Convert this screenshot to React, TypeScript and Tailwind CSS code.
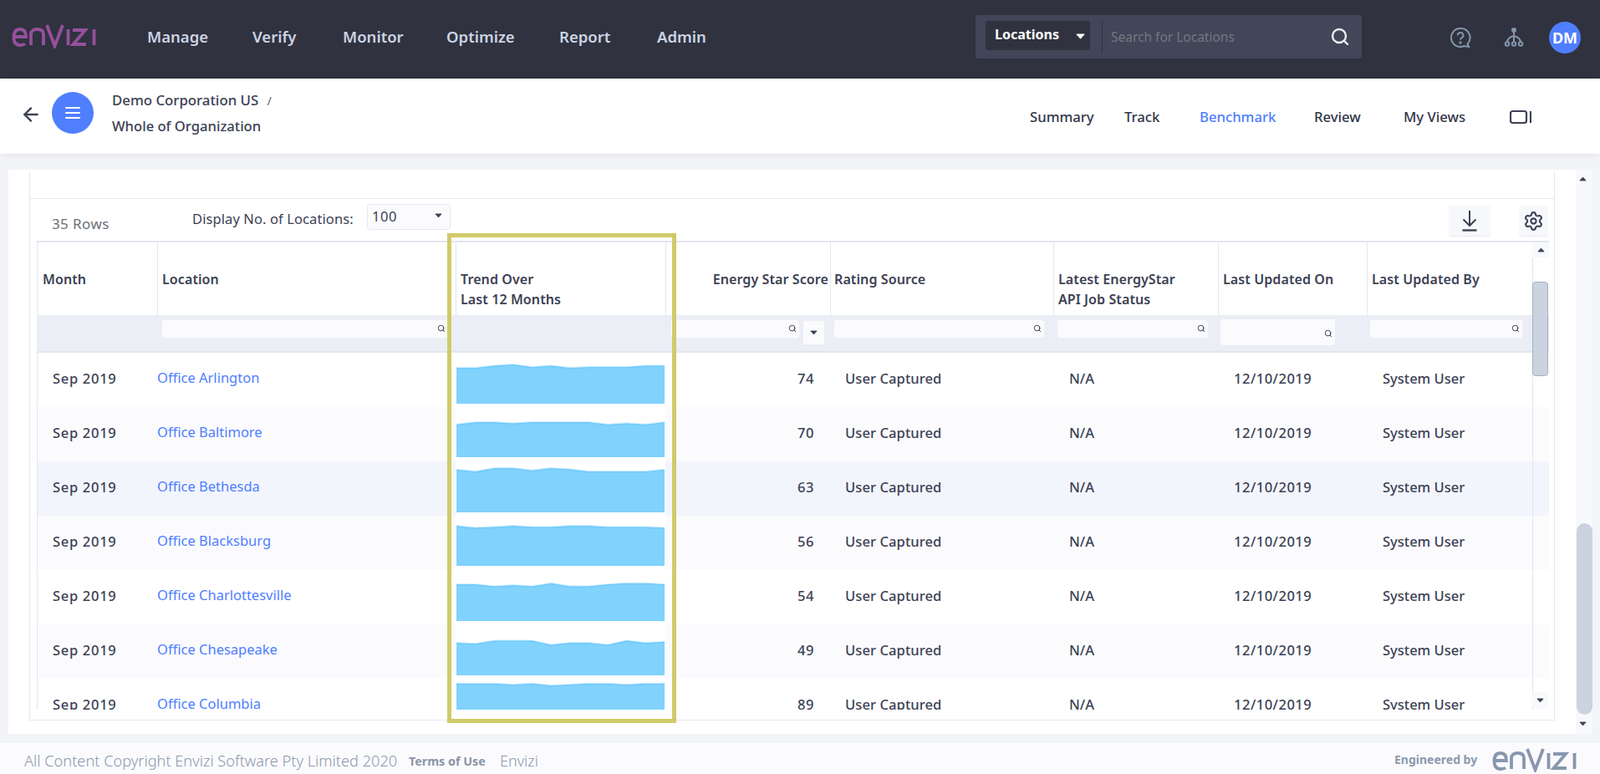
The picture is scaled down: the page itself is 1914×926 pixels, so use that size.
import { ArrowLeft, Search, Settings } from "lucide-react";

const rows = [
  { name: "Office Arlington", score: "74", bg: "bg-white", bottom: 61, ys: [30,30,22,18,27,22,30,27,27,27,22,22], base: 430, rowTop: 422 },
  { name: "Office Baltimore", score: "70", bg: "bg-[#fbfbfe]", bottom: 60, ys: [233,225,225,229,225,225,225,225,233,229,233,225], base: 430, rowTop: 487 },
  { name: "Office Bethesda", score: "63", bg: "bg-[#f3f5fd]", bottom: 61, ys: [395,402,390,390,398,390,394,402,402,402,402,395], base: 430, rowTop: 552 },
  { name: "Office Blacksburg", score: "56", bg: "bg-[#fbfbfe]", bottom: 60, ys: [597,604,601,597,601,601,597,597,601,601,601,604], base: 430, rowTop: 617 },
  { name: "Office Charlottesville", score: "54", bg: "bg-white", bottom: 61, ys: [87,87,94,90,94,83,94,94,87,83,83,87], base: 670, rowTop: 682 },
  { name: "Office Chesapeake", score: "49", bg: "bg-[#fbfbfe]", bottom: 61, ys: [297,300,289,289,289,304,297,297,304,289,297,293], base: 670, rowTop: 747 },
  { name: "Office Columbia", score: "89", bg: "bg-white", bottom: 37, ys: [443,443,443,447,443,450,447,443,443,447,443,443], base: 670, rowTop: 812 },
];

const GRID = "grid grid-cols-[144px_357px_251px_197px_267px_197px_178px_198px]";

function Logo({ color, className }: { color: string; className: string }) {
  return (
    <svg viewBox="0 0 102 30" className={className} fill="none" stroke={color} strokeWidth="3.800" role="img" aria-label="envizi logo">
      <path d="M3 16h14c0-6-2.500-9-7-9s-7.500 3-7.500 9.500 3 9.500 7.500 9.500c2.500 0 4.500-.5 6-1.500" />
      <path d="M23 26V13c0-4 3-6 7.500-6s7.500 2 7.500 6v13" />
      <path d="M42 2L51.500 27L61 2" />
      <path d="M67.500 7v19" />
      <path d="M73 8h15L73.500 25h15.500" />
      <path d="M98.500 7v19" />
    </svg>
  );
}

function Caret({ className, color = "#3c4154" }: { className?: string; color?: string }) {
  return (
    <svg viewBox="0 0 10 6" className={className}>
      <path d="M1 .8h8L5 5.200z" fill={color} stroke={color} strokeWidth="1" strokeLinejoin="round" />
    </svg>
  );
}

function FilterBox({ className }: { className: string }) {
  return (
    <div className={`relative bg-[#fbfbfe] rounded-[4px] border border-[#eef0f6] ${className}`}>
      <Search size={10} strokeWidth={2.400} className="absolute right-[3px] top-[5px] text-[#3c4154]" />
    </div>
  );
}

function Sparkline({ r }: { r: (typeof rows)[number] }) {
  const pts = r.ys.map((z, i) => [1 + (i * 249) / 11, r.base + z / 3 - r.rowTop] as const);
  const line = pts.map((p) => `${p[0]},${p[1]}`).join(" ");
  return (
    <svg viewBox="0 0 251 65" width="251" height="65" className="absolute left-0 top-0">
      <polygon points={`${line} 250,${r.bottom} 1,${r.bottom}`} fill="#81d2fd" />
      <polyline points={line} fill="none" stroke="#6fcafb" strokeWidth="1.500" transform="translate(0 .8)" />
      <polyline points={line} fill="none" stroke="#bfe7fe" strokeWidth=".8" transform="translate(0 -.4)" />
    </svg>
  );
}

export default function App() {
  const navItems: [string, string][] = [["Manage","w-[126px]"],["Verify","w-[108px]"],["Monitor","w-[124px]"],["Optimize","w-[135px]"],["Report","w-[117px]"],["Admin","w-[80px]"]];
  const tabs: [string, string, string][] = [["Summary","w-[113px]","text-[#33364a]"],["Track","w-[90px]","text-[#33364a]"],["Benchmark","w-[137px]","text-[#4f7eff]"],["Review","w-[107px]","text-[#33364a]"],["My Views","w-[132px]","text-[#33364a]"]];
  const headerCls = "text-[16px] font-semibold text-[#3c4154] tracking-[0.1px]";
  const cellCls = "text-[16.500px] font-medium text-[#3c4154]";
  return (
    <div className="relative w-[1914px] h-[926px] overflow-hidden bg-[#f3f4f7] font-['Lato','Liberation_Sans',sans-serif]">
      {/* top header */}
      <header className="h-[94px] bg-[#30323f] flex items-center relative">
        <Logo color="#95509b" className="absolute left-[14px] top-[28px] w-[102px] h-[30px]" />
        <nav className="absolute left-[176px] top-[30px] flex h-[28px] items-center text-[#ccd4e4] text-[18.500px] font-semibold">
          {navItems.map(([t, w]) => (
            <span key={t} className={w}>{t}</span>
          ))}
        </nav>
        <div className="absolute left-[1167px] top-[18px] w-[462px] h-[52px] bg-[#414659] rounded-[3px] flex items-start pt-[7px] pl-[12px]">
          <div className="w-[125px] h-[35px] rounded-[3px] bg-[#30323f] flex items-center pl-[11px] text-white text-[16px] font-bold relative">
            <span className="-mt-[3px]">Locations</span>
            <Caret color="#ffffff" className="absolute left-[108px] top-[15px] w-[11px] h-[7px]" />
          </div>
          <div className="ml-[14px] w-[1px] h-[38px] bg-[#30323f]" />
          <span className="ml-[10px] mt-[8px] text-[15.500px] text-[#75777f]">Search for Locations</span>
          <Search size={24} strokeWidth={2.400} className="absolute left-[424px] top-[14px] text-[#e8ebf2]" />
        </div>
        <svg viewBox="0 0 26 26" className="absolute left-[1734px] top-[32px] w-[26px] h-[26px]" fill="none" stroke="#8495ab" strokeWidth="2">
          <path d="M13 2a11 11 0 1 0 4.500 21l5.500 1-1.500-3.500A11 11 0 0 0 13 2z" />
          <path d="M9.800 10.200a3.300 3.300 0 1 1 4.700 3c-1 .6-1.500 1.200-1.500 2.300" />
          <circle cx="13" cy="19" r=".7" fill="#8495ab" />
        </svg>
        <svg viewBox="0 0 24 24" className="absolute left-[1799px] top-[32px] w-[24px] h-[24px]" fill="none" stroke="#8495ab" strokeWidth="2">
          <circle cx="12" cy="4" r="3" fill="#8495ab" stroke="none" />
          <path d="M12 5v14M12 11c-5 1-8 3-8 8M12 11c5 1 8 3 8 8" />
          <circle cx="4" cy="20.500" r="2.200" fill="#30323f" />
          <circle cx="12" cy="20.500" r="2.200" fill="#30323f" />
          <circle cx="20" cy="20.500" r="2.200" fill="#30323f" />
        </svg>
        <div className="absolute left-[1853px] top-[26px] w-[38px] h-[38px] rounded-full bg-[#4f7eff] flex items-center justify-center text-white text-[18px] font-bold">DM</div>
      </header>

      {/* sub header */}
      <div className="h-[90px] bg-white relative shadow-[0_2px_8px_rgba(40,45,70,0.07)] z-10">
        <ArrowLeft size={26} strokeWidth={2.200} className="absolute left-[24px] top-[30px] text-[#3c4154]" />
        <div className="absolute left-[62px] top-[16px] w-[50px] h-[50px] rounded-full bg-[#4f7eff] flex flex-col items-center justify-center gap-[4px]">
          <span className="w-[18px] h-[2px] bg-white rounded-sm" />
          <span className="w-[18px] h-[2px] bg-white rounded-sm" />
          <span className="w-[18px] h-[2px] bg-white rounded-sm" />
        </div>
        <div className="absolute left-[134px] top-[14px] text-[16.800px] font-medium text-[#3c4154] leading-[24px] whitespace-nowrap">
          Demo Corporation US <span className="ml-[6px] text-[14px] text-[#777]">/</span>
        </div>
        <div className="absolute left-[134px] top-[45px] text-[16.600px] font-medium text-[#3c4154] leading-[24px] whitespace-nowrap">Whole of Organization</div>
        <div className="absolute left-[1232px] top-[34px] h-[24px] flex items-center text-[16.700px] font-medium">
          {tabs.map(([t, w, c]) => (
            <span key={t} className={`${w} ${c}`}>{t}</span>
          ))}
          <svg viewBox="0 0 26 16" className="w-[26px] h-[18px] ml-[-5px]" fill="none" stroke="#3c4154" strokeWidth="2.200">
            <rect x="1" y="1" width="19" height="14" rx="2.500" />
            <path d="M25 1v14" />
          </svg>
        </div>
      </div>

      {/* content panel */}
      <div className="absolute left-[10px] top-[203px] w-[1895px] h-[675px] bg-white">
        {/* outer scrollbar */}
        <div className="absolute left-[1875px] top-0 w-[20px] h-[675px] bg-[#f8f9fd]">
          <Caret className="absolute left-[4px] top-[8px] w-[9px] h-[6px] rotate-180" />
          <div className="absolute left-[1px] top-[423px] w-[19px] h-[229px] rounded-[10px] bg-[#cbd3e1]" />
          <Caret className="absolute left-[4px] top-[660px] w-[9px] h-[6px]" />
        </div>
        {/* inner bordered box */}
        <div className="absolute left-[25px] top-[3px] w-[1825px] h-[656px] border-l border-r border-b border-[#e3e6f0]">
          <div className="h-[32px] border-b border-[#e3e6f0]" />
        </div>
        <span className="absolute left-[52px] top-[55px] text-[17px] tracking-[0.4px] text-[#6c6f78] leading-[20px]">35 Rows</span>
        <span className="absolute left-[220px] top-[49px] text-[16.500px] tracking-[0.1px] text-[#3c4154] leading-[20px] whitespace-nowrap">Display No. of Locations:</span>
        <div className="absolute left-[429px] top-[41px] w-[100px] h-[31px] rounded-[4px] bg-[#fbfbfe] border border-[#e5e7f0] flex items-start pt-[2px] pl-[5px] text-[16.500px] tracking-[0.5px] text-[#3c4154] leading-[24px]">
          100
          <Caret className="absolute left-[80px] top-[10px] w-[9px] h-[6px]" />
        </div>
        <div className="absolute left-[1723px] top-[43px] w-[50px] h-[37px] rounded-[3px] bg-[#f7f8fc] border-b border-[#e8eaf2] flex items-center justify-center">
          <svg viewBox="0 0 20 26" className="w-[20px] h-[26px]" fill="none" stroke="#3c4154" strokeWidth="2">
            <path d="M10 1v18M2.500 11.500L10 19l7.500-7.500" />
            <path d="M1.500 24.500h17" strokeWidth="2.400" />
          </svg>
        </div>
        <div className="absolute left-[1807px] top-[43px] w-[35px] h-[37px] rounded-[3px] bg-[#f7f8fc] border-b border-[#e8eaf2] flex items-center justify-center">
          <Settings size={25} strokeWidth={2} className="text-[#3c4154]" />
        </div>

        {/* table */}
        <div className="absolute left-[34px] top-[85px] w-[1809px] h-[561px] overflow-hidden border-t-2 border-[#e3e6f0]">
          <div className={`${GRID} h-[87px] ${headerCls}`}>
            <div className="border-l border-[#e3e6f0] pl-[6px] flex items-center"><span className="mt-[1px]">Month</span></div>
            <div className="border-l border-[#e3e6f0] pl-[5px] flex items-center"><span className="mt-[1px]">Location</span></div>
            <div className="border-l border-[#e3e6f0] pl-[5px] pt-[32px] leading-[24px]"><span>Trend Over<br />Last 12 Months</span></div>
            <div className="border-l border-[#e3e6f0] pr-[2px] flex items-center justify-end"><span className="mt-[1px] whitespace-nowrap">Energy Star Score</span></div>
            <div className="border-l border-[#e3e6f0] pl-[4px] flex items-center"><span className="mt-[1px]">Rating Source</span></div>
            <div className="border-l border-[#e3e6f0] pl-[5px] pt-[32px] leading-[24px]"><span>Latest EnergyStar<br />API Job Status</span></div>
            <div className="border-l border-[#e3e6f0] pl-[5px] flex items-center"><span className="mt-[1px]">Last Updated On</span></div>
            <div className="border-l border-[#e3e6f0] pl-[5px] flex items-center"><span className="mt-[1px]">Last Updated By</span></div>
          </div>
          <div className={`${GRID} h-[45px] bg-[#ebeef5] border-b-2 border-[#e3e6f0]`}>
            <div />
            <div className="pl-[5px] pt-[5px]"><FilterBox className="w-[344px] h-[23px]" /></div>
            <div />
            <div className="relative pl-[6px] pt-[5px]">
              <FilterBox className="w-[155px] h-[23px]" />
              <div className="absolute left-[165px] top-[7px] w-[25px] h-[28px] bg-[#fbfbfe] flex items-center justify-center"><Caret className="w-[9px] h-[6px]" /></div>
            </div>
            <div className="pl-[4px] pt-[5px]"><FilterBox className="w-[253px] h-[23px]" /></div>
            <div className="pl-[4px] pt-[5px]"><FilterBox className="w-[182px] h-[23px]" /></div>
            <div className="relative pl-[3px] pt-[5px]">
              <div className="relative w-[137px] h-[31px] bg-[#fbfbfe] rounded-b-[4px]">
                <Search size={10} strokeWidth={2.400} className="absolute right-[3px] top-[12px] text-[#3c4154]" />
              </div>
            </div>
            <div className="pl-[3px] pt-[5px]"><FilterBox className="w-[184px] h-[23px]" /></div>
          </div>
          {rows.map((r) => (
            <div key={r.name} className={`${GRID} h-[65px] ${r.bg} ${cellCls}`}>
              <div className="border-l border-[#e3e6f0] pl-[18px] pt-[19px] leading-[24px] tracking-[0.7px] whitespace-nowrap">Sep 2019</div>
              <div className="pt-[18px] leading-[24px] text-[#4f7eff] font-normal whitespace-nowrap">{r.name}</div>
              <div className="relative bg-white"><Sparkline r={r} /></div>
              <div className="pr-[19px] pt-[19px] leading-[24px] tracking-[0.5px] text-right">{r.score}</div>
              <div className="pl-[18px] pt-[19px] leading-[24px] tracking-[0.1px] whitespace-nowrap">User Captured</div>
              <div className="pl-[19px] pt-[19px] leading-[24px]">N/A</div>
              <div className="pl-[19px] pt-[19px] leading-[24px] tracking-[0.5px]">12/10/2019</div>
              <div className="pl-[19px] pt-[19px] leading-[24px] whitespace-nowrap">System User</div>
            </div>
          ))}
          {/* inner scrollbar */}
          <div className="absolute left-[1789px] top-0 w-[1px] h-[559px] bg-[#e3e6f0]" />
          <div className="absolute left-[1789px] top-0 w-[20px] h-[18px] bg-[#f8f9fd] flex items-center justify-center"><Caret className="w-[9px] h-[6px] rotate-180" /></div>
          <div className="absolute left-[1789px] top-[47px] w-[19px] h-[113px] rounded-[4px] bg-[#cbd3e0] border border-[#a9b0bc]" />
          <div className="absolute left-[1789px] top-[538px] w-[19px] h-[20px] rounded-[4px] bg-[#f8f9fd] flex items-center justify-center"><Caret className="w-[9px] h-[6px]" /></div>
        </div>
      </div>

      {/* highlight */}
      <div className="absolute left-[535px] top-[279px] w-[274px] h-[586px] border-[5px] border-[#d1ca69] pointer-events-none" />

      {/* footer */}
      <footer className="absolute left-0 top-[887px] w-[1914px] h-[39px] bg-[#fbfbfe] border-t border-[#e8ecf3] text-[#8c99ad]">
        <span className="absolute left-[29px] top-[10px] text-[18.200px] leading-[24px] font-light whitespace-nowrap">All Content Copyright Envizi Software Pty Limited 2020</span>
        <span className="absolute left-[489px] top-[11px] text-[14.300px] leading-[24px] font-bold text-[#8a94a6] whitespace-nowrap">Terms of Use</span>
        <span className="absolute left-[598px] top-[10px] text-[18px] leading-[24px] font-light">Envizi</span>
        <span className="absolute left-[1668px] top-[9px] text-[14px] leading-[24px] font-bold whitespace-nowrap">Engineered by</span>
        <Logo color="#8797ae" className="absolute left-[1785px] top-[6px] w-[102px] h-[30px]" />
      </footer>
    </div>
  );
}
